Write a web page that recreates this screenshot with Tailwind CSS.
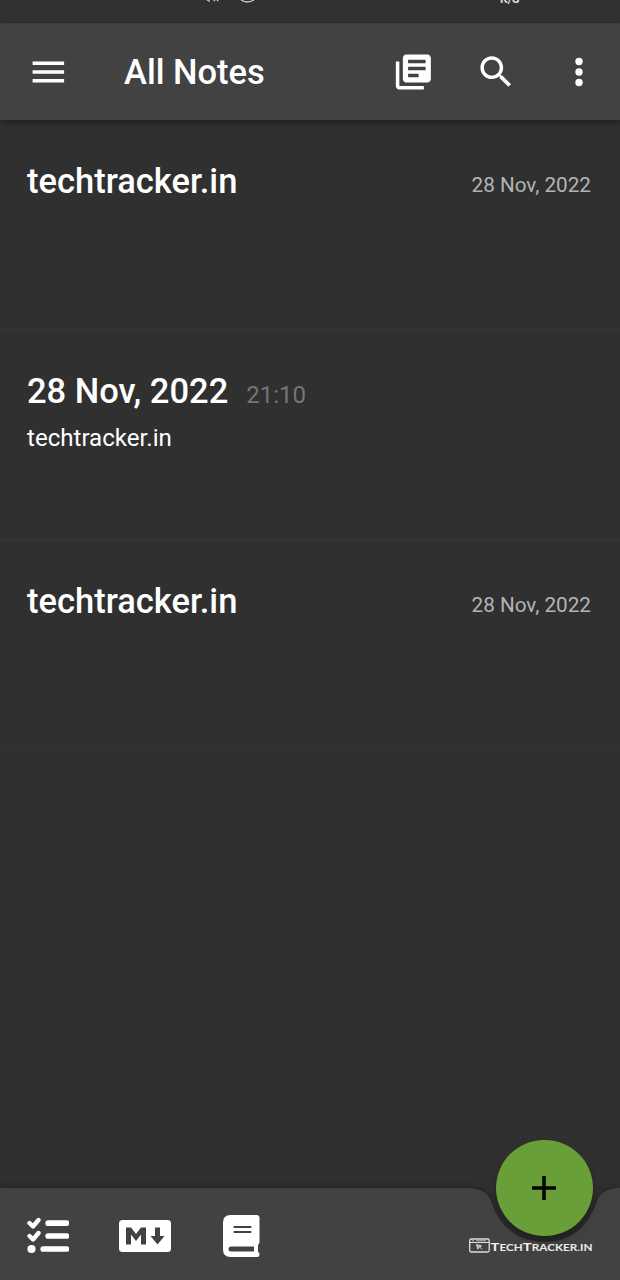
<!DOCTYPE html>
<html lang="en">
<head>
<meta charset="utf-8">
<title>All Notes</title>
<script src="https://cdn.jsdelivr.net/npm/@tailwindcss/browser@4"></script>
</head>
<body class="bg-[#303030]">
<div class="flex h-[1280px] w-[620px] flex-col overflow-hidden bg-[#303030] font-[Roboto,sans-serif] text-white">
  <div class="h-[23px] shrink-0 bg-[#313131]">
    <svg class="block" width="620" height="23" fill="none" stroke="#d0d0d0" stroke-width="1.3">
      <path d="M207 0l3 1.500M213-1l2 2M219-1l-2 2M241 0q6 4 13 0"/>
      <text x="500" y="2.500" font-size="12" font-weight="700" fill="#ddd" stroke="none">K/S</text>
    </svg>
  </div>
  <header class="z-10 flex h-[97px] shrink-0 items-center border-t border-[#3b3b3b] bg-[#424242] pl-[27px] pr-[20px] shadow-[0_2px_6px_rgba(0,0,0,0.4)]">
    <svg class="mb-[1px] size-[42px]" viewBox="0 0 24 24" fill="#fff"><path d="M3.200 18h18v-2h-18v2zm0-5h18v-2h-18v2zm0-7v2h18V6h-18z"/></svg>
    <h1 class="ml-[55px] flex-1 whitespace-nowrap text-[34.5px] font-medium leading-none">All Notes</h1>
    <svg class="mb-[1px] size-[42px]" viewBox="-0.2 0 24 24" fill="#fff"><path d="M4 6H2v14c0 1.1.9 2 2 2h14v-2H4V6zm16-4H8c-1.1 0-2 .9-2 2v12c0 1.100.9 2 2 2h12c1.100 0 2-.9 2-2V4c0-1.100-.9-2-2-2zm-1 9H9V9h10v2zm-4 4H9v-2h6v2zm4-8H9V5h10v2z"/></svg>
    <svg class="mb-[1px] ml-[41px] size-[42px]" viewBox="-0.1 0 24 24" fill="#fff"><path d="M15.500 14h-.79l-.28-.27C15.410 12.590 16 11.110 16 9.500 16 5.910 13.090 3 9.500 3S3 5.910 3 9.500 5.910 16 9.500 16c1.610 0 3.090-.59 4.230-1.570l.27.28v.79l5 4.990L20.490 19l-4.990-5zm-6 0C7.010 14 5 11.990 5 9.500S7.010 5 9.500 5 14 7.010 14 9.500 11.990 14 9.500 14z"/></svg>
    <svg class="mb-[1px] ml-[41px] size-[42px]" viewBox="0 0 24 24" fill="#fff"><circle cx="12" cy="6" r="2.100"/><circle cx="12" cy="12" r="2.100"/><circle cx="12" cy="18" r="2.100"/></svg>
  </header>
  <main class="flex-1">
    <article class="flex h-[211px] items-baseline justify-between border-b-2 border-[#343434] pl-[27px] pr-[29px] pt-[41px]">
      <h2 class="text-[34.5px] font-medium leading-[40px]">techtracker.in</h2>
      <time class="-translate-y-px text-[20.700px] text-[#b4b4b4]">28 Nov, 2022</time>
    </article>
    <article class="h-[210px] border-b-2 border-[#343434] pl-[27px] pr-[29px] pt-[40px]">
      <div class="flex h-[40px] items-baseline gap-[18px]">
        <h2 class="text-[34.5px] font-medium leading-[40px]">28 Nov, 2022</h2>
        <time class="text-[24px] leading-[40px] text-[#757575]">21:10</time>
      </div>
      <p class="mt-[13px] text-[24.100px] leading-[28px]">techtracker.in</p>
    </article>
    <article class="flex h-[209px] items-baseline justify-between border-b-2 border-[#323232] pl-[27px] pr-[29px] pt-[40px]">
      <h2 class="text-[34.5px] font-medium leading-[40px]">techtracker.in</h2>
      <time class="-translate-y-px text-[20.700px] text-[#b4b4b4]">28 Nov, 2022</time>
    </article>
  </main>
  <footer class="relative flex h-[92px] shrink-0 items-center pl-[27px] pt-[4px]">
    <svg class="absolute inset-0 overflow-visible" width="620" height="92">
      <path class="drop-shadow-[0_-1px_3px_rgba(0,0,0,0.3)]" d="M0 0H466C480 0 488 5 491 13C500 40 519 54 544 54S588 40 597 13C600 5 608 0 620 0V92H0Z" fill="#424242"/>
    </svg>
    <svg class="relative size-[42px]" viewBox="0 0 42 42" fill="none" stroke="#fff" stroke-linecap="round">
      <path d="M2.500 8L6 11.500 11.500 5M2.500 21L6 24.500 11.500 18" stroke-width="4.300" stroke-linejoin="round"/>
      <path d="M21.200 8.200H39.500M21.200 21H39.500M16.200 34H39.500" stroke-width="5.700"/>
      <circle cx="4.500" cy="34" r="4.100" fill="#fff" stroke="none"/>
    </svg>
    <svg class="relative ml-[50px] h-[32px] w-[52px]" viewBox="0 0 52 32">
      <rect width="52" height="32" rx="3.500" fill="#fff"/>
      <path d="M7 24.500V7.500H12L17 14 22 7.500H27V24.500H22V14.500L17 21 12 14.500V24.500ZM36 7.500H41V16H45.500L38.500 24.500 31.500 16H36Z" fill="#424242"/>
    </svg>
    <svg class="relative ml-[52px] h-[42px] w-[37px]" viewBox="0 0 37 42">
      <path d="M7.500 0H33.500Q36.500 0 36.500 3V27Q36.500 29 35 30V37Q36.500 37 36.500 39.500T34 42H7.500Q0 42 0 34.500V7.500Q0 0 7.500 0Z" fill="#fff"/>
      <path d="M8 31.500H31V36.500H8Q5.500 36.500 5.500 34T8 31.500Z" fill="#424242"/>
      <path d="M11.500 12H27.500M11.500 17H27.500" stroke="#424242" stroke-width="2.200" stroke-linecap="round"/>
    </svg>
    <button class="absolute left-[496px] top-[-48.500px] flex size-[96.500px] items-center justify-center rounded-full bg-[#689f38] shadow-[0_4px_7px_rgba(0,0,0,0.35)]" aria-label="Add note">
      <svg class="size-[42px]" viewBox="0 0 42 42"><path d="M21 9V33M9 21H33" stroke="#000" stroke-width="3.500"/></svg>
    </button>
    <svg class="absolute left-[468px] top-[48px]" width="126" height="20">
      <rect x="1.700" y="3" width="19.500" height="13" rx="1.500" fill="none" stroke="#ddd" stroke-width="1.300"/>
      <path d="M2 6.500H21" stroke="#ddd" stroke-width="1"/>
      <path d="M4 4.800H6M8 4.800H18" stroke="#bbb" stroke-width="1"/>
      <path d="M8.500 8.500l5 1.300-1.700 1.200 2.500 2.500M8.500 8.500l1.300 4.700 1.300-1.800" fill="#ccc" stroke="#ddd" stroke-width=".8"/>
      <text x="22.500" y="15.300" textLength="102" lengthAdjust="spacingAndGlyphs" font-family="Lato, sans-serif" font-weight="700" font-size="8.500" fill="#eee"><tspan font-size="10.800">T</tspan>ECH<tspan font-size="10.800">T</tspan>RACKER.IN</text>
    </svg>
  </footer>
</div>
</body>
</html>
